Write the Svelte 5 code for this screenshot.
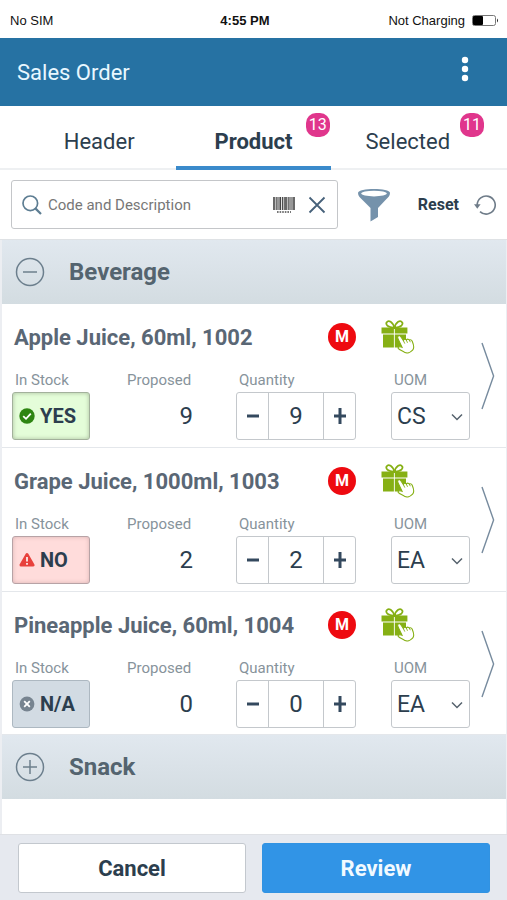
<script lang="ts">
type Stock = 'YES' | 'NO' | 'N/A';
type Item = { name: string; stock: Stock; proposed: number; qty: number; uom: string };
type Category = { name: string; open: boolean; items: Item[] };

const tabs = [
  { name: 'Header', count: 0 },
  { name: 'Product', count: 13 },
  { name: 'Selected', count: 11 },
];
const STOCK_STATES: Stock[] = ['YES', 'NO', 'N/A'];

let active = 'Product';
let query = '';
let categories: Category[] = [
  {
    name: 'Beverage',
    open: true,
    items: [
      { name: 'Apple Juice, 60ml, 1002', stock: 'YES', proposed: 9, qty: 9, uom: 'CS' },
      { name: 'Grape Juice, 1000ml, 1003', stock: 'NO', proposed: 2, qty: 2, uom: 'EA' },
      { name: 'Pineapple Juice, 60ml, 1004', stock: 'N/A', proposed: 0, qty: 0, uom: 'EA' },
    ],
  },
  { name: 'Snack', open: false, items: [] },
];

function step(item: Item, dir: number) {
  item.qty = Math.max(0, Number(item.qty) + dir);
  categories = categories;
}

function nextStock(item: Item) {
  item.stock = STOCK_STATES[(STOCK_STATES.indexOf(item.stock) + 1) % STOCK_STATES.length];
  categories = categories;
}
</script>

<div class="app">
  <div class="status">
    <span>No SIM</span>
    <b>4:55 PM</b>
    <span class="charge">
      Not Charging
      <svg width="27" height="12" viewBox="0 0 27 12" aria-hidden="true">
        <rect x="0.5" y="0.5" width="23" height="10" rx="2" fill="none" stroke="#777" />
        <rect x="1" y="1" width="10" height="9" rx="1" fill="#000" />
        <path d="M25 3.5 q2 2 0 4z" fill="#222" />
      </svg>
    </span>
  </div>

  <header>
    <h1>Sales Order</h1>
    <button class="menu" aria-label="Menu">
      <svg width="8" height="26" viewBox="0 0 8 26">
        <circle cx="4" cy="4" r="3.2" /><circle cx="4" cy="13" r="3.2" /><circle cx="4" cy="22" r="3.2" />
      </svg>
    </button>
  </header>

  <div class="tabs" role="tablist">
    {#each tabs as tab}
      <button role="tab" class:active={active === tab.name} aria-selected={active === tab.name} on:click={() => (active = tab.name)}>
        {tab.name}
        {#if tab.count}<span class="badge">{tab.count}</span>{/if}
      </button>
    {/each}
  </div>

  <div class="tools">
    <div class="search">
      <svg width="20" height="20" viewBox="0 0 20 20" fill="none" stroke="#5d7d92" aria-hidden="true">
        <circle cx="8.3" cy="8.3" r="7.3" stroke-width="1.7" />
        <path d="M13.6 13.6 L19 19" stroke-width="2.2" />
      </svg>
      <input type="text" placeholder="Code and Description" aria-label="Code and Description" bind:value={query}>
      <button aria-label="Scan barcode">
        <svg width="22" height="18" viewBox="0 0 22 18" fill="none" stroke="#444">
          <path d="M1 1v13M7.2 1v13M13 1v13M21 1v13" stroke-width="1.6" />
          <path d="M3.2 1v13M5 1v13M9.4 1v13M11.2 1v13M15.2 1v13M17 1v13M19 1v13" stroke-width="1.1" />
          <path d="M4 16h14" stroke-width="2" stroke-dasharray="1.6 1" stroke="#777" />
        </svg>
      </button>
      <button aria-label="Clear" on:click={() => (query = '')}>
        <svg width="18" height="18" viewBox="0 0 18 18" fill="none" stroke="#46617a" stroke-width="1.8">
          <path d="M1.5 1.5 L16.5 16.5 M16.5 1.5 L1.5 16.5" />
        </svg>
      </button>
    </div>
    <button class="filter" aria-label="Filter">
      <svg width="34" height="34" viewBox="0 0 34 34">
        <path d="M1 5 C1 -0.4 33 -0.4 33 5 C33 8 31 9.5 28.5 12 L21 20 V29 L13.5 33.5 V20 L5.5 12 C3 9.5 1 8 1 5z" fill="#7592ab" />
        <ellipse cx="17" cy="5.6" rx="12.8" ry="2.8" fill="#fff" />
      </svg>
    </button>
    <button class="reset">
      Reset
      <svg width="22" height="22" viewBox="0 0 22 22" fill="none" aria-hidden="true">
        <path d="M3.2 11 A9 9 0 1 1 6 17.6" stroke="#6f7c89" stroke-width="1.6" />
        <path d="M0 10.2 H6.6 L3.3 14.8z" fill="#6f7c89" />
      </svg>
    </button>
  </div>

  <main>
    {#each categories as cat}
      <button class="category" aria-expanded={cat.open} on:click={() => (cat.open = !cat.open)}>
        <svg width="30" height="30" viewBox="0 0 30 30" fill="none" stroke="#6c7f8d" stroke-width="1.5" aria-hidden="true">
          <circle cx="15" cy="15" r="13.5" />
          <path d="M8 15h14" />
          {#if !cat.open}<path d="M15 8v14" />{/if}
        </svg>
        {cat.name}
      </button>
      {#if cat.open}
        {#each cat.items as item}
          <section class="item">
            <div class="body">
              <h2>{item.name}</h2>
              <span class="must">M</span>
              <svg class="gift" width="34" height="34" viewBox="0 0 34 34" aria-hidden="true">
                <g fill="none" stroke="#86b014" stroke-width="1.8">
                  <path d="M13.4 8 C6 7 4.6 4.4 5.6 2.4 C7.4 -0.4 12 1.6 13.4 8z" />
                  <path d="M13.4 8 C20.8 7 22.2 4.4 21.2 2.4 C19.4 -0.4 14.8 1.6 13.4 8z" />
                </g>
                <path d="M0.5 7.6h12.4v6H0.5z M13.8 7.6h12.6v6H13.8z M2 14.5h10.9v13H2z M13.8 14.5H25v13H13.8z" fill="#86b014" />
                <path d="M17 16.2 C18.4 15 19.6 16 20.2 17.2 L22.4 20.6 C23 19 24.6 19 25.3 20 C26.2 18.8 27.8 19 28.3 20 C30 19.2 31 20.4 31.4 21.8 C32.6 24.6 33.6 28 31.6 30.2 C29.4 32.6 26 33.6 24 32.6 C21.8 31 18.6 30 17.2 28.4 C16.6 27 18.6 26.2 21 27.2 L17 18.8 C16.6 17.6 16.4 16.8 17 16.2z" fill="#fff" stroke="#86b014" stroke-width="1.1" />
                <path d="M22.4 20.6l1.4 3 M25.3 20l1.2 2.8 M28.3 20l1 2.2" fill="none" stroke="#86b014" stroke-width="0.9" />
              </svg>

              <div class="field stock">
                <span class="label">In Stock</span>
                <button class:yes={item.stock === 'YES'} class:no={item.stock === 'NO'} on:click={() => nextStock(item)}>
                  <svg width="16" height="16" viewBox="0 0 16 16" aria-hidden="true">
                    {#if item.stock === 'YES'}
                      <circle cx="8" cy="8" r="7.7" fill="#2e8512" />
                      <path d="M4.2 8.2 L7 10.8 L11.8 5.6" fill="none" stroke="#fff" stroke-width="1.8" />
                    {:else if item.stock === 'NO'}
                      <path d="M8 2.6 L14 13 H2z" fill="#e8413c" stroke="#e8413c" stroke-width="3" stroke-linejoin="round" />
                      <path d="M8 5v4.6M8 11v1.8" stroke="#fff" stroke-width="1.6" />
                    {:else}
                      <circle cx="8" cy="8" r="7.4" fill="#778490" />
                      <path d="M5.2 5.2l5.6 5.6M10.8 5.2l-5.6 5.6" stroke="#fff" stroke-width="1.8" />
                    {/if}
                  </svg>
                  {item.stock}
                </button>
              </div>
              <div class="field proposed">
                <span class="label">Proposed</span>
                <span class="num">{item.proposed}</span>
              </div>
              <div class="field quantity">
                <span class="label">Quantity</span>
                <div class="stepper">
                  <button aria-label="Decrease" on:click={() => step(item, -1)}>
                    <svg width="18" height="18" viewBox="0 0 18 18"><path d="M3 9h12" /></svg>
                  </button>
                  <input type="text" inputmode="numeric" aria-label="Quantity" bind:value={item.qty}>
                  <button aria-label="Increase" on:click={() => step(item, 1)}>
                    <svg width="18" height="18" viewBox="0 0 18 18"><path d="M3 9h12M9 1v16" /></svg>
                  </button>
                </div>
              </div>
              <label class="field uom">
                <span class="label">UOM</span>
                <span class="pick">
                  <select bind:value={item.uom}>
                    <option>CS</option>
                    <option>EA</option>
                  </select>
                  <svg width="12" height="8" viewBox="0 0 12 8" fill="none" stroke="#56626d" stroke-width="1.5" aria-hidden="true">
                    <path d="M1 1.5 L6 6.5 L11 1.5" />
                  </svg>
                </span>
              </label>
            </div>
            <button class="more" aria-label="Details">
              <svg width="14" height="68" viewBox="0 0 14 68" fill="none" stroke="#778b9e" stroke-width="1.4">
                <path d="M1 1 L12.6 34 L1 67" />
              </svg>
            </button>
          </section>
        {/each}
      {/if}
    {/each}
  </main>

  <footer>
    <button>Cancel</button>
    <button class="primary">Review</button>
  </footer>
</div>

<style>
:global(body) {
  margin: 0;
  background: #fff;
}
.app {
  min-height: 100vh;
  display: flex;
  flex-direction: column;
  font-family: Roboto, "Liberation Sans", sans-serif;
  color: #2c3e4e;
}
.app *, .app {
  box-sizing: border-box;
}
button, input, select {
  font: inherit;
  color: inherit;
  margin: 0;
  padding: 0;
  border: 0;
  background: none;
}
svg {
  display: block;
  flex: none;
}
h1, h2 {
  margin: 0;
}
.status {
  height: 38px;
  padding: 3px 8px 0 10px;
  display: grid;
  grid-template-columns: 11fr auto 12fr;
  align-items: center;
  font: 13px "Liberation Sans", Arial, sans-serif;
  color: #111;
}
.charge {
  display: flex;
  justify-content: flex-end;
  align-items: center;
  gap: 7px;
}
header {
  height: 68px;
  padding: 0 38px 0 17px;
  display: flex;
  align-items: center;
  justify-content: space-between;
  background: #2672a3;
}
h1 {
  font-size: 22px;
  font-weight: 400;
  color: #e8f7ff;
}
.menu {
  fill: #fff;
  margin-bottom: 6px;
}
.tabs {
  height: 64px;
  padding: 0 22px;
  display: flex;
  border-bottom: 2px solid #eef0f2;
}
.tabs button {
  position: relative;
  flex: 1;
  height: 64px;
  padding-top: 11px;
  font-size: 22px;
  border-bottom: 4px solid transparent;
}
.tabs .active {
  font-weight: 700;
  border-color: #3a8acb;
}
.badge {
  position: absolute;
  top: 7px;
  right: 1px;
  width: 24px;
  height: 24px;
  border-radius: 10px;
  background: #e0368c;
  color: #fff;
  font-size: 16px;
  font-weight: 400;
  line-height: 24px;
}
.tools {
  height: 70px;
  padding: 0 11px;
  display: flex;
  align-items: center;
  border-bottom: 1px solid #dfe2e5;
}
.search {
  flex: 1;
  min-width: 0;
  height: 49px;
  padding: 0 11px 0 10px;
  display: flex;
  align-items: center;
  border: 1px solid #c4c6c9;
  border-radius: 3px;
}
.search input {
  flex: 1;
  min-width: 0;
  padding-left: 6px;
  font-size: 15px;
  outline: none;
}
.search input::placeholder {
  color: #777;
  opacity: 1;
}
.search button + button {
  margin-left: 13px;
}
.filter {
  margin: 0 27px 0 19px;
}
.reset {
  display: flex;
  align-items: center;
  gap: 15px;
  font-size: 16px;
  font-weight: 700;
}
main {
  flex: 1;
  border: solid #eceef2;
  border-width: 0 1px 0 2px;
}
.category {
  width: 100%;
  height: 64px;
  padding: 0 13px;
  display: flex;
  align-items: center;
  gap: 24px;
  background: linear-gradient(#e1e8ef, #d3dce1);
  font-size: 24px;
  font-weight: 700;
  color: #54646f;
}
.item {
  height: 144px;
  padding: 16px 11px 0 10px;
  display: flex;
  gap: 11px;
  border-bottom: 1px solid #e4e7eb;
}
.item:last-of-type {
  height: 143px;
}
.body {
  flex: 1;
  display: grid;
  grid-template-columns: 115fr 109fr 155fr 79fr;
  grid-template-rows: 34px 54px;
  align-items: center;
}
h2 {
  grid-column: 1 / 4;
  grid-row: 1;
  padding-left: 2px;
  font-size: 22px;
  font-weight: 700;
  color: #5a6775;
}
.must {
  grid-column: 3;
  grid-row: 1;
  justify-self: end;
  width: 28px;
  height: 28px;
  margin-right: 35px;
  border-radius: 50%;
  background: #ee0a10;
  color: #fff;
  font-size: 16px;
  font-weight: 700;
  line-height: 28px;
  text-align: center;
}
.gift {
  grid-column: 4;
  grid-row: 1;
  margin-left: -10px;
}
.field {
  align-self: start;
  display: block;
  padding-top: 16px;
}
.label {
  display: block;
  height: 22px;
  padding-left: 3px;
  font-size: 15px;
  line-height: 20px;
  color: #87939b;
}
.stock button {
  width: 78px;
  height: 48px;
  padding-left: 6px;
  display: flex;
  align-items: center;
  gap: 5px;
  border: 1px solid #adb8c1;
  border-radius: 3px;
  background: #d2dbe3;
  font-size: 20px;
  font-weight: 700;
}
.stock .yes {
  border-color: #a3b19c;
  background: #e4fdd9;
  box-shadow: inset 0 0 4px #a8bd9d;
}
.stock .no {
  border-color: #b7a3a6;
  background: #ffdcdb;
  box-shadow: inset 0 0 4px #d9b3b3;
}
.proposed {
  width: 66px;
}
.proposed .label {
  padding-left: 0;
}
.num {
  display: block;
  font-size: 24px;
  line-height: 48px;
  text-align: right;
}
.stepper {
  width: 120px;
  height: 48px;
  display: flex;
  border: 1px solid #c4c8cc;
  border-radius: 3px;
}
.stepper button {
  width: 31px;
  display: grid;
  place-items: center;
  stroke: #34495e;
  stroke-width: 3;
}
.stepper input {
  flex: 1;
  min-width: 0;
  border: solid #c4c8cc;
  border-width: 0 1px;
  font-size: 24px;
  text-align: center;
}
.pick {
  position: relative;
  display: block;
}
.pick select {
  width: 100%;
  height: 48px;
  padding-left: 5px;
  appearance: none;
  border: 1px solid #c4c8cc;
  border-radius: 3px;
  font-size: 23px;
}
.pick svg {
  position: absolute;
  top: 21px;
  right: 7px;
  pointer-events: none;
}
.more {
  align-self: start;
  margin-top: 22px;
}
footer {
  height: 66px;
  padding: 8px 17px 0 18px;
  display: flex;
  gap: 16px;
  background: #e6e9ef;
  border-top: 1px solid #dfe1e5;
}
footer button {
  flex: 1;
  height: 50px;
  border: 1px solid #c3c8ce;
  border-radius: 3px;
  background: #fff;
  font-size: 22px;
  font-weight: 700;
}
footer .primary {
  border-color: #3193e2;
  background: #3194e6;
  color: #f2faff;
}
</style>
